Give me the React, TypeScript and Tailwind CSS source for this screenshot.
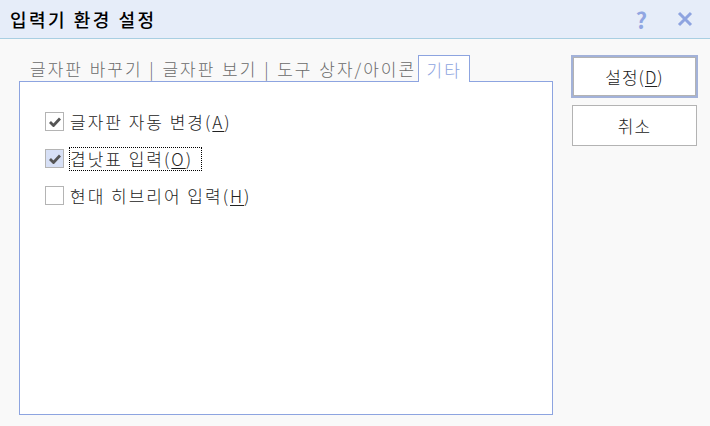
import React from "react";

const font = { fontFamily: '"Noto Sans CJK KR", "Noto Sans", sans-serif' };

const CheckIcon = () => (
    <svg width="12" height="10" viewBox="0 0 12 10">
        <path d="M1 5 L4.5 8.5 L11 1.5" fill="none" stroke="#555" strokeWidth="2.8" />
    </svg>
);

const Option = ({ label, hotkey, checked, focused }: { label: string; hotkey: string; checked: boolean; focused?: boolean }) => (
    <div className="flex items-center h-[19px]">
        <div className={`w-[19px] h-[19px] border border-[#b4b4b4] flex items-center justify-center ${focused ? "bg-[#d7e0f6]" : "bg-white"}`}>
            {checked && <CheckIcon />}
        </div>
        <div className={`ml-[5px] h-[24px] flex items-center text-[17px] font-light tracking-[2px] text-[#222] leading-none ${focused ? "pr-[8px] border border-dotted border-black" : "pr-[3px] border border-transparent"}`}>
            {label}(<span className="underline underline-offset-2">{hotkey}</span>)
        </div>
    </div>
);

export default function App() {
    return (
        <div className="w-[710px] h-[426px] bg-[#f9f9f9] flex flex-col overflow-hidden" style={font}>
            {/* title bar */}
            <div className="h-[39px] bg-[#e6edf9] border-b border-[#a9cfe2] flex items-center pl-[10px] shrink-0">
                <span className="text-[18px] font-medium text-black tracking-[2.5px]">입력기 환경 설정</span>
                <div className="ml-auto flex items-center">
                    <span className="text-[22px] font-bold text-[#91a6e2] leading-none mr-[30px]">?</span>
                    <svg width="16" height="16" viewBox="0 0 16 16" className="mr-[17px]">
                        <path d="M2 2 L14 14 M14 2 L2 14" stroke="#8ea4e0" strokeWidth="3" />
                    </svg>
                </div>
            </div>

            <div className="flex pl-[19px] pt-[16px]">
                {/* left: tabs + panel */}
                <div className="w-[534px] flex flex-col">
                    <div className="h-[26px] flex items-end pl-[11px] text-[17px] font-light tracking-[2px] leading-none">
                        <span className="text-[#6a6a6a] pb-[4px] [word-spacing:1px]">글자판 바꾸기 | 글자판 보기 | 도구 상자/아이콘</span>
                        <div className="ml-[2px] h-[27px] w-[52px] justify-center border border-b-0 border-[#8da4e0] bg-white -mb-px relative z-10 flex items-center text-[#8da4e0]">
                            기타
                        </div>
                    </div>
                    <div className="h-[334px] bg-white border border-[#8da4e0] pl-[25px] pt-[30px] flex flex-col gap-[18px]">
                        <Option label="글자판 자동 변경" hotkey="A" checked />
                        <Option label="겹낫표 입력" hotkey="O" checked focused />
                        <Option label="현대 히브리어 입력" hotkey="H" checked={false} />
                    </div>
                </div>

                {/* right: buttons */}
                <div className="ml-[18px] flex flex-col gap-[7px]">
                    <button className="w-[127px] h-[43px] bg-white border-2 border-[#a3b2d9] shadow-[inset_0_0_0_1px_#b3b3b3] text-[17px] font-light tracking-[1px] text-[#222]">
                        설정(<span className="underline underline-offset-2">D</span>)
                    </button>
                    <button className="w-[125px] h-[41px] ml-px bg-white border border-[#b3b3b3] text-[17px] font-light tracking-[1px] text-[#222]">
                        취소
                    </button>
                </div>
            </div>
        </div>
    );
}
